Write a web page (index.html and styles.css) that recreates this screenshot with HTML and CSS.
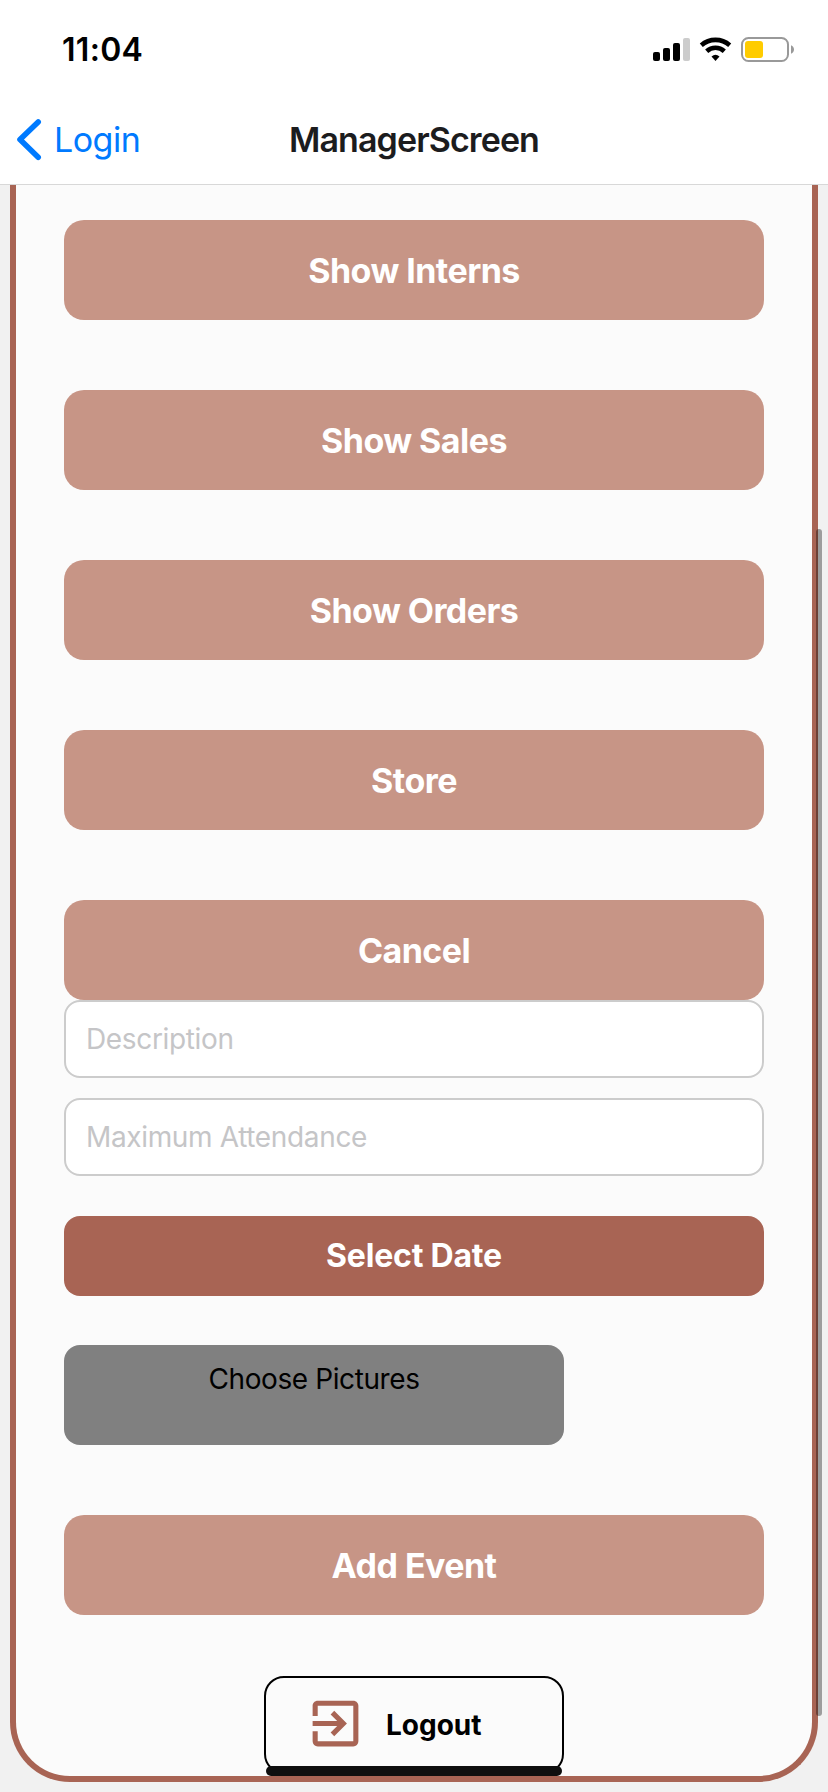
FILE: index.html
```html
<!DOCTYPE html>
<html lang="en">
<head>
<meta charset="utf-8">
<title>ManagerScreen</title>
<link rel="stylesheet" href="styles.css">
</head>
<body>
<div class="screen">
  <div class="status-bar">
    <span class="time">11:04</span>
    <svg class="status-icons" width="144" height="28" viewBox="0 0 144 28">
      <rect x="1" y="16" width="7" height="9" rx="2"/>
      <rect x="11" y="12" width="7" height="13" rx="2"/>
      <rect x="21" y="7" width="7" height="18" rx="2"/>
      <rect x="31" y="2" width="7" height="23" rx="2" fill="#ccc"/>
      <g fill="none" stroke="#000" stroke-width="4.6">
        <path d="M49.3 9.2A21.5 21.5 0 0 1 77.7 9.2"/>
        <path d="M54.7 15.2A13 13 0 0 1 72.3 15.2"/>
      </g>
      <path d="M59.5 20.4A6.2 6.2 0 0 1 67.5 20.4L63.5 24.9Z"/>
      <rect x="90" y="2" width="46" height="23" rx="6.5" fill="#fff" stroke="#999" stroke-width="2"/>
      <rect x="93" y="5" width="18" height="17" rx="3" fill="#fc0"/>
      <path d="M139 9.2C143 11 143 16 139 17.8Z" fill="#999"/>
    </svg>
  </div>
  <header class="nav">
    <a class="back">
      <svg class="chevron" width="26" height="44" viewBox="0 0 26 44"><path d="M22.2 4L4 21.6L22.2 39.2" fill="none" stroke="#007aff" stroke-width="5.6" stroke-linecap="round" stroke-linejoin="round"/></svg>
      <span class="back-label">Login</span>
    </a>
    <h1 class="title">ManagerScreen</h1>
  </header>
  <main class="content">
    <section class="panel">
      <button class="btn">Show Interns</button>
      <button class="btn">Show Sales</button>
      <button class="btn">Show Orders</button>
      <button class="btn">Store</button>
      <button class="btn cancel">Cancel</button>
      <input class="field description" type="text" placeholder="Description">
      <input class="field attendance" type="text" placeholder="Maximum Attendance">
      <button class="date">Select Date</button>
      <button class="pictures">Choose Pictures</button>
      <button class="btn add">Add Event</button>
      <button class="logout">
        <svg width="61" height="61" viewBox="0 0 24 24" fill="#a86454"><path d="M19,3H5C3.89,3 3,3.89 3,5V9H5V5H19V19H5V15H3V19A2,2 0 0,0 5,21H19A2,2 0 0,0 21,19V5C21,3.89 20.1,3 19,3M10.08,15.58L11.5,17L16.5,12L11.5,7L10.08,8.41L12.67,11H3V13H12.67L10.08,15.58Z"/></svg>
        <span>Logout</span>
      </button>
    </section>
  </main>
  <div class="scrollbar"></div>
  <div class="home-indicator"></div>
</div>
</body>
</html>
```
FILE: styles.css
```css
* { box-sizing: border-box; }
body { margin: 0; font-family: Inter, "Liberation Sans", sans-serif; }
button { border: 0; margin: 0; padding: 0; font-family: inherit; }
.screen { position: relative; width: 828px; height: 1792px; overflow: hidden; display: flex; flex-direction: column; background: #f1f1f1; }
.status-bar { height: 96px; background: #fff; display: flex; justify-content: space-between; align-items: flex-start; padding: 36px 32px 0 62px; }
.time { font-size: 32px; line-height: 28px; font-weight: 600; letter-spacing: 0.3px; }
.nav { height: 89px; background: #fff; border-bottom: 1px solid #d8d8d8; display: grid; grid-template-columns: 1fr auto 1fr; align-items: start; padding-top: 22px; }
.back { display: flex; padding-left: 16px; color: #007aff; font-size: 34px; line-height: 44px; letter-spacing: -0.5px; }
.back-label { margin-left: 12px; }
.title { margin: 0; font-size: 34px; line-height: 44px; font-weight: 600; color: #1c1c1e; letter-spacing: -0.9px; }
.content { padding: 0 10px; }
.panel { height: 1597px; border: 6px solid #a86454; border-top: 0; border-radius: 0 0 60px 60px; background: #fbfbfb; padding: 35px 48px 0; display: flex; flex-direction: column; }
.btn { flex: none; height: 100px; margin-bottom: 70px; border-radius: 20px; background: #c79586; color: #fff; font-size: 34px; font-weight: 700; letter-spacing: -0.55px; }
.cancel { margin-bottom: 0; }
.field { flex: none; height: 78px; border: 2px solid #ccc; border-radius: 16px; background: #fff; padding: 0 20px; font-family: inherit; font-size: 28px; letter-spacing: -0.35px; }
.field::placeholder { color: #c5c5c7; opacity: 1; }
.description { margin-bottom: 20px; }
.attendance { margin-bottom: 40px; }
.date { flex: none; height: 80px; margin-bottom: 49px; border-radius: 16px; background: #a86454; color: #fff; font-size: 32px; font-weight: 700; letter-spacing: -0.2px; padding-bottom: 1px; }
.pictures { flex: none; width: 500px; height: 100px; margin-bottom: 70px; border-radius: 16px; background: #808080; color: #000; font-size: 28px; letter-spacing: -0.4px; padding-bottom: 33px; }
.add { margin-bottom: 61px; }
.logout { flex: none; align-self: center; width: 300px; height: 98px; border: 2px solid #000; border-radius: 20px; background: transparent; color: #000; display: flex; align-items: flex-start; padding: 15px 0 0 39px; font-size: 28px; font-weight: 700; }
.logout span { margin-left: 20px; line-height: 64px; }
.scrollbar { position: absolute; left: 816px; top: 529px; width: 6px; height: 1187px; border-radius: 3px; background: rgba(0, 0, 0, .35); }
.home-indicator { position: absolute; left: 266px; top: 1766px; width: 296px; height: 10px; border-radius: 5px; background: #0f0f0f; }
```
